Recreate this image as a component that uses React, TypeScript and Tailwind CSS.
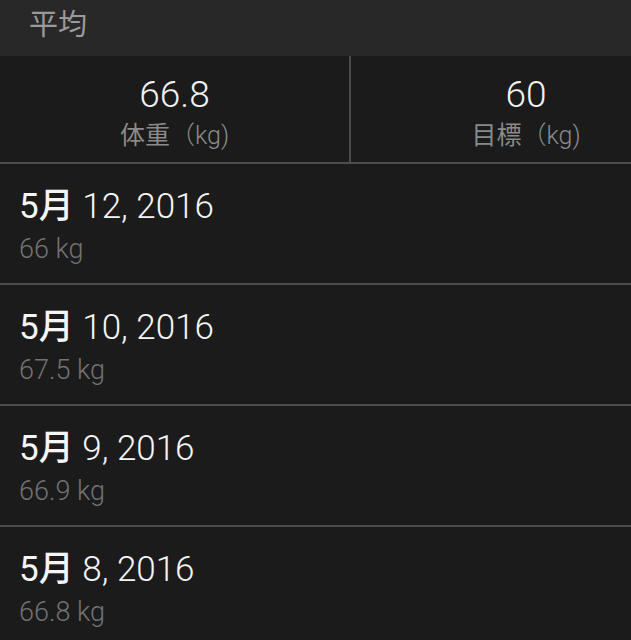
import React from "react";

const rows = [
  { d: "12, 2016", w: "66 kg" },
  { d: "10, 2016", w: "67.5 kg" },
  { d: "9, 2016", w: "66.9 kg" },
  { d: "8, 2016", w: "66.8 kg" },
];

export default function App() {
  return (
    <div
      className="w-[631px] h-[640px] overflow-hidden bg-[#1b1b1b] font-light"
      style={{ fontFamily: "Roboto, 'Noto Sans CJK JP', sans-serif" }}
    >
      <div className="h-[56px] bg-[#282828] flex items-center pl-[29px] pb-[6px]">
        <span className="text-[29px] leading-[34px] text-[#9a9a9a] font-normal">平均</span>
      </div>
      <div className="flex h-[108px] border-b-2 border-[#4d4d4d]">
        <div className="w-[351px] shrink-0 flex flex-col items-center pt-[17px] border-r-2 border-[#4d4d4d]">
          <div className="text-[37px] leading-[44px] text-[#f2f2f2]">66.8</div>
          <div className="mt-[4px] text-[25px] leading-[30px] text-[#8a8a8a]">
            <span className="font-normal">体重</span>（kg)
          </div>
        </div>
        <div className="w-[350px] shrink-0 flex flex-col items-center pt-[17px]">
          <div className="text-[37px] leading-[44px] text-[#f2f2f2]">60</div>
          <div className="mt-[4px] text-[25px] leading-[30px] text-[#8a8a8a]">
            <span className="font-normal">目標</span>（kg)
          </div>
        </div>
      </div>
      {rows.map((r, i) => (
        <div
          key={i}
          className={`h-[121px] pl-[19px] pt-[23px] ${i < rows.length - 1 ? "border-b-2 border-[#4d4d4d]" : ""}`}
        >
          <div className="text-[35px] leading-[40px] text-[#f5f5f5] whitespace-nowrap">
            <span className="font-normal">5</span>
            <span className="font-medium">月</span> {r.d}
          </div>
          <div className="mt-[6px] text-[27px] leading-[32px] text-[#727272] whitespace-nowrap">{r.w}</div>
        </div>
      ))}
    </div>
  );
}
